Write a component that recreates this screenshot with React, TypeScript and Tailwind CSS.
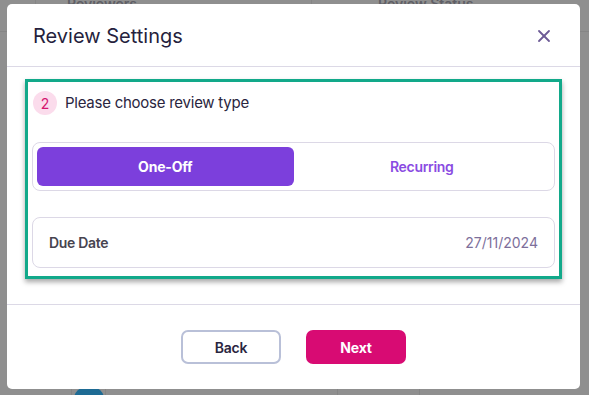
import { X } from 'lucide-react';

export default function App() {
  return (
    <div className="relative h-[395px] w-[589px] overflow-hidden bg-[#8f8f8f] font-['Inter',sans-serif]">
      <Backdrop />
      <div className="absolute left-[7px] top-[4px] flex h-[385px] w-[573px] flex-col rounded-[5px] bg-white">
        <header className="flex h-[63px] items-center justify-between border-b border-[#dcd9e6] pl-[26px] pr-[26px] pt-[2px]">
          <h1 className="text-[20px] font-normal text-[#261f3d]">Review Settings</h1>
          <button type="button" className="text-[#6d5b96]" aria-label="Close">
            <X size={20} strokeWidth={2.2} />
          </button>
        </header>

        <div className="border-b border-[#dcd9e6] px-[18px] pb-[25px] pt-[12px]">
          <section className="h-[200px] border-[3px] border-[#12a98a] px-[4px] pt-[9px] shadow-[0_3px_5px_rgba(0,0,0,0.35)]">
            <div className="flex items-center gap-[8px] pl-[1px]">
              <span className="flex h-[24px] w-[24px] items-center justify-center rounded-full bg-[#fbdcec] text-[14px] text-[#d4166f]">2</span>
              <span className="text-[15px] tracking-[-0.25px] text-[#2a2540]">Please choose review type</span>
            </div>

            <div className="mt-[27px] flex h-[49px] rounded-[8px] border border-[#dcd8e6] p-[4px]">
              <button type="button" className="flex-1 rounded-[6px] bg-[#7c3fdc] text-[14px] font-bold tracking-[-0.2px] text-white">One-Off</button>
              <button type="button" className="flex-1 text-[14px] font-semibold tracking-[-0.3px] text-[#8a4be2]">Recurring</button>
            </div>

            <div className="mt-[26px] flex h-[51px] items-center justify-between rounded-[8px] border border-[#dcd8e6] px-[16px]">
              <span className="text-[14px] font-semibold tracking-[-0.3px] text-[#47444f]">Due Date</span>
              <span className="text-[14px] text-[#7d6f9b]">27/11/2024</span>
            </div>
          </section>
        </div>

        <footer className="flex flex-1 items-start justify-center gap-[25px] pt-[25px]">
          <button type="button" className="h-[34px] w-[100px] rounded-[7px] border-2 border-[#b9c0d8] text-[14px] font-semibold tracking-[-0.2px] text-[#2a2540]">Back</button>
          <button type="button" className="h-[34px] w-[100px] rounded-[7px] bg-[#d80b73] text-[14px] font-bold tracking-[-0.2px] text-white">Next</button>
        </footer>
      </div>
    </div>
  );
}

function Backdrop() {
  return (
    <div className="flex h-full flex-col">
      <div className="flex h-[32px] border-b border-[#858585]">
        <div className="w-[36px] border-r border-[#858585]" />
        <div className="w-[222px] pl-[31px] text-[14px] font-semibold leading-[8px] text-[#5f5f66]">Reviewers</div>
        <div className="w-[54px] border-r border-[#858585]" />
        <div className="pl-[66px] text-[14px] font-semibold leading-[8px] text-[#5f5f66]">Review Status</div>
      </div>
      <div className="flex-1" />
      <div className="flex h-[6px]">
        <div className="w-[72px] border-r border-[#858585]" />
        <div className="flex w-[33px] justify-center">
          <div className="mt-[-2px] h-[24px] w-[30px] rounded-full bg-[#1e6b94]" />
        </div>
        <div className="w-[233px] border-l border-r border-[#858585]" />
        <div className="w-[82px] border-r border-[#858585]" />
      </div>
    </div>
  );
}
